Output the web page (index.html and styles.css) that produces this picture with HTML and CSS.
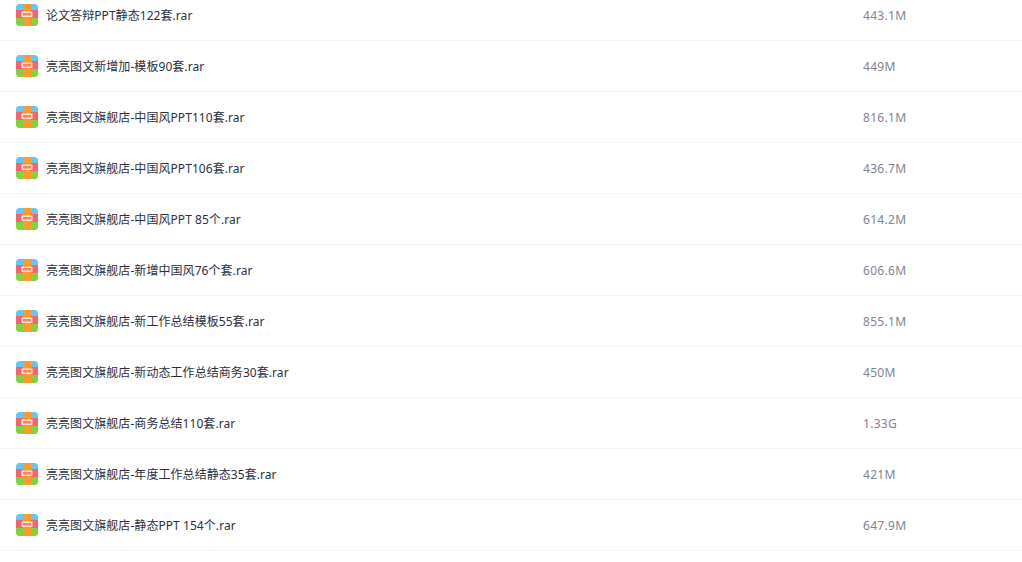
FILE: index.html
```html
<!DOCTYPE html>
<html lang="zh-CN">
<head>
<meta charset="utf-8">
<title>文件列表</title>
<link rel="stylesheet" href="styles.css">
</head>
<body>
<svg class="defs" width="0" height="0" aria-hidden="true"><defs>
<symbol id="rar" viewBox="0 0 22 22">
<clipPath id="rr"><rect width="22" height="22" rx="3.5"/></clipPath>
<g clip-path="url(#rr)">
<rect width="22" height="6" fill="#62c6fa"/>
<rect y="6" width="22" height="8" fill="#f4646a"/>
<rect y="14" width="22" height="8" fill="#82d13e"/>
<rect x="7" width="8" height="22" fill="#fc9a2e"/>
<rect x="5.5" y="7.5" width="11" height="5.5" fill="#fde3c8"/>
<rect x="7" y="9" width="8" height="2.5" fill="#f9826a"/>
</g>
</symbol>
</defs></svg>
<ul class="list">
<li class="row"><svg class="icon"><use href="#rar"/></svg><span class="name">论文答辩PPT静态122套.rar</span><span class="size">443.1M</span></li>
<li class="row"><svg class="icon"><use href="#rar"/></svg><span class="name">亮亮图文新增加-模板90套.rar</span><span class="size">449M</span></li>
<li class="row"><svg class="icon"><use href="#rar"/></svg><span class="name">亮亮图文旗舰店-中国风PPT110套.rar</span><span class="size">816.1M</span></li>
<li class="row"><svg class="icon"><use href="#rar"/></svg><span class="name">亮亮图文旗舰店-中国风PPT106套.rar</span><span class="size">436.7M</span></li>
<li class="row"><svg class="icon"><use href="#rar"/></svg><span class="name">亮亮图文旗舰店-中国风PPT 85个.rar</span><span class="size">614.2M</span></li>
<li class="row"><svg class="icon"><use href="#rar"/></svg><span class="name">亮亮图文旗舰店-新增中国风76个套.rar</span><span class="size">606.6M</span></li>
<li class="row"><svg class="icon"><use href="#rar"/></svg><span class="name">亮亮图文旗舰店-新工作总结模板55套.rar</span><span class="size">855.1M</span></li>
<li class="row"><svg class="icon"><use href="#rar"/></svg><span class="name">亮亮图文旗舰店-新动态工作总结商务30套.rar</span><span class="size">450M</span></li>
<li class="row"><svg class="icon"><use href="#rar"/></svg><span class="name">亮亮图文旗舰店-商务总结110套.rar</span><span class="size">1.33G</span></li>
<li class="row"><svg class="icon"><use href="#rar"/></svg><span class="name">亮亮图文旗舰店-年度工作总结静态35套.rar</span><span class="size">421M</span></li>
<li class="row"><svg class="icon"><use href="#rar"/></svg><span class="name">亮亮图文旗舰店-静态PPT 154个.rar</span><span class="size">647.9M</span></li>
</ul>
</body>
</html>
```
FILE: styles.css
```css
html, body {
  margin: 0;
  padding: 0;
  height: 100%;
  overflow: hidden;
  background: #fff;
}
.defs {
  display: block;
  height: 0;
}
.list {
  list-style: none;
  margin: -10px 0 0;
  padding: 0;
  font-family: "Noto Sans", "Noto Sans CJK SC", sans-serif;
}
.row {
  display: flex;
  align-items: center;
  box-sizing: border-box;
  height: 51px;
  padding: 0 0 0 16px;
  border-bottom: 1px solid #f3f5fa;
}
.icon {
  width: 22px;
  height: 22px;
  flex: none;
  margin-right: 8px;
}
.name {
  width: 817px;
  flex: none;
  padding-top: 2px;
  font-size: 12px;
  line-height: 16px;
  letter-spacing: 0.06px;
  color: #2c3040;
}
.size {
  padding-top: 2px;
  font-size: 12px;
  line-height: 16px;
  letter-spacing: 0.3px;
  color: #7f8493;
}
```
